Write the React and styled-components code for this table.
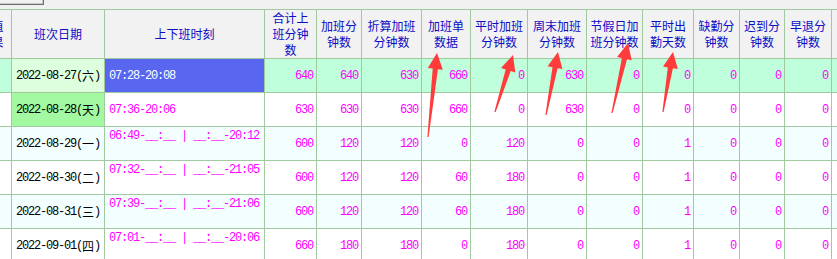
import React from 'react'
import styled, { createGlobalStyle } from 'styled-components'

const COLS = [40, 93, 160, 52, 45, 60, 49, 57, 59, 56, 51, 46, 45, 47, 60]

const HEADERS = [
  '取值结果', '班次日期', '上下班时刻', '合计上班分钟数', '加班分钟数', '折算加班分钟数',
  '加班单数据', '平时加班分钟数', '周末加班分钟数', '节假日加班分钟数', '平时出勤天数',
  '缺勤分钟数', '迟到分钟数', '早退分钟数', '',
]

const ROWS = [
  { date: '2022-08-27', week: '六', time: '07:28-20:08', nums: [640, 640, 630, 660, 0, 630, 0, 0, 0, 0, 0], tone: 'mint', dateTone: 'pale', selected: true },
  { date: '2022-08-28', week: '天', time: '07:36-20:06', nums: [630, 630, 630, 660, 0, 630, 0, 0, 0, 0, 0], tone: 'white', dateTone: 'green' },
  { date: '2022-08-29', week: '一', time: '06:49-__:__ | __:__-20:12', nums: [600, 120, 120, 0, 120, 0, 0, 1, 0, 0, 0], tone: 'cyan', split: true },
  { date: '2022-08-30', week: '二', time: '07:32-__:__ | __:__-21:05', nums: [600, 120, 120, 60, 180, 0, 0, 1, 0, 0, 0], tone: 'white', split: true },
  { date: '2022-08-31', week: '三', time: '07:39-__:__ | __:__-21:06', nums: [600, 120, 120, 60, 180, 0, 0, 1, 0, 0, 0], tone: 'cyan', split: true },
  { date: '2022-09-01', week: '四', time: '07:01-__:__ | __:__-20:06', nums: [660, 180, 180, 0, 180, 0, 0, 1, 0, 0, 0], tone: 'white', split: true },
]

// tip x, tip y, tail x, tail y
const ARROWS = [
  [437, 53, 428, 137],
  [513, 55, 495, 112],
  [558, 52, 546, 115],
  [628, 43, 612, 113],
  [673, 52, 663, 112],
]

const TONES = {
  mint: '#bfffdb',
  white: '#ffffff',
  cyan: '#f3fffe',
  pale: '#ddffdd',
  green: '#a2f9a2',
}

const arrowPoints = ([tx, ty, bx, by]) => {
  const len = Math.hypot(tx - bx, ty - by)
  const ux = (tx - bx) / len
  const uy = (ty - by) / len
  const nx = -uy
  const ny = ux
  const hx = tx - ux * 16
  const hy = ty - uy * 16
  const pt = (x, y) => `${x.toFixed(1)},${y.toFixed(1)}`
  return [
    pt(tx, ty),
    pt(hx + nx * 7.5, hy + ny * 7.5),
    pt(hx + nx * 2.6, hy + ny * 2.6),
    pt(bx + nx * 0.6, by + ny * 0.6),
    pt(bx - nx * 0.6, by - ny * 0.6),
    pt(hx - nx * 2.6, hy - ny * 2.6),
    pt(hx - nx * 7.5, hy - ny * 7.5),
  ].join(' ')
}

const App = () => {
  return (
    <Page>
      <GlobalStyle />
      <Toolbar>
        <ToolButton />
      </Toolbar>
      <Grid>
        {HEADERS.map((h, i) => (
          <HeadCell key={i}>{h}</HeadCell>
        ))}
        {ROWS.map((r, ri) => (
          <React.Fragment key={ri}>
            <Cell $bg={TONES[r.tone]} />
            <DateCell $bg={TONES[r.dateTone || r.tone]}>
              {r.date}(<Week>{r.week}</Week>)
            </DateCell>
            <TimeCell $bg={r.selected ? '#5866f0' : TONES[r.tone]} $selected={r.selected} $top={r.split}>
              {r.time}
            </TimeCell>
            {r.nums.map((n, ni) => (
              <NumCell key={ni} $bg={TONES[r.tone]}>{n}</NumCell>
            ))}
            <Cell $bg={TONES[r.tone]} />
          </React.Fragment>
        ))}
      </Grid>
      <Overlay width="837" height="259" viewBox="0 0 837 259">
        {ARROWS.map((a, i) => (
          <polygon key={i} points={arrowPoints(a)} fill="#ff3b3b" />
        ))}
      </Overlay>
    </Page>
  )
}

const GlobalStyle = createGlobalStyle`
  html, body {
    margin: 0;
    padding: 0;
    background: #f0f0f0;
    overflow: hidden;
  }
`

const Page = styled.div`
  position: relative;
  width: 837px;
  height: 259px;
  overflow: hidden;
  background: #f0f0f0;
`

const Toolbar = styled.div`
  height: 9px;
  display: flex;
  align-items: flex-start;
`

const ToolButton = styled.div`
  width: 44px;
  height: 5px;
  box-sizing: border-box;
  background: #f0f0f0;
  border-right: 1px solid #6e6e6e;
  border-bottom: 1px solid #6e6e6e;
  box-shadow: inset -1px -1px 0 #c8c8c8;
`

const Grid = styled.div`
  display: grid;
  grid-template-columns: ${COLS.map((w) => `${w}px`).join(' ')};
  grid-template-rows: 49px repeat(6, 34px);
  margin-left: -28px;
  width: max-content;
  border-top: 1px solid #a0c9a0;
`

const Cell = styled.div`
  box-sizing: border-box;
  border-right: 1px solid #a0c9a0;
  border-bottom: 1px solid #a0c9a0;
  background: ${(p) => p.$bg || '#fff'};
  display: flex;
  align-items: center;
  overflow: hidden;
  white-space: nowrap;
  font-family: "Liberation Mono", "Noto Sans CJK SC", monospace;
  font-size: 12px;
  letter-spacing: -1.2px;
`

const HeadCell = styled(Cell)`
  background: #f2f2f2;
  justify-content: center;
  text-align: center;
  white-space: normal;
  padding: 0 3px;
  font-family: "Noto Sans CJK SC", sans-serif;
  font-size: 12px;
  line-height: 16px;
  letter-spacing: 0;
  color: #0c0cc4;
`

const DateCell = styled(Cell)`
  padding-left: 4px;
  color: #000;
`

const Week = styled.span`
  font-family: "Noto Sans CJK SC", sans-serif;
  font-size: 12px;
  letter-spacing: 0;
`

const TimeCell = styled(Cell)`
  padding-left: 4px;
  align-items: ${(p) => (p.$top ? 'flex-start' : 'center')};
  padding-top: ${(p) => (p.$top ? '1px' : '0')};
  line-height: 16px;
  color: ${(p) => (p.$selected ? '#fff' : '#ff00ff')};
`

const NumCell = styled(Cell)`
  justify-content: flex-end;
  padding-right: 3px;
  color: #ff00ff;
`

const Overlay = styled.svg`
  position: absolute;
  left: 0;
  top: 0;
  pointer-events: none;
`

export default App
